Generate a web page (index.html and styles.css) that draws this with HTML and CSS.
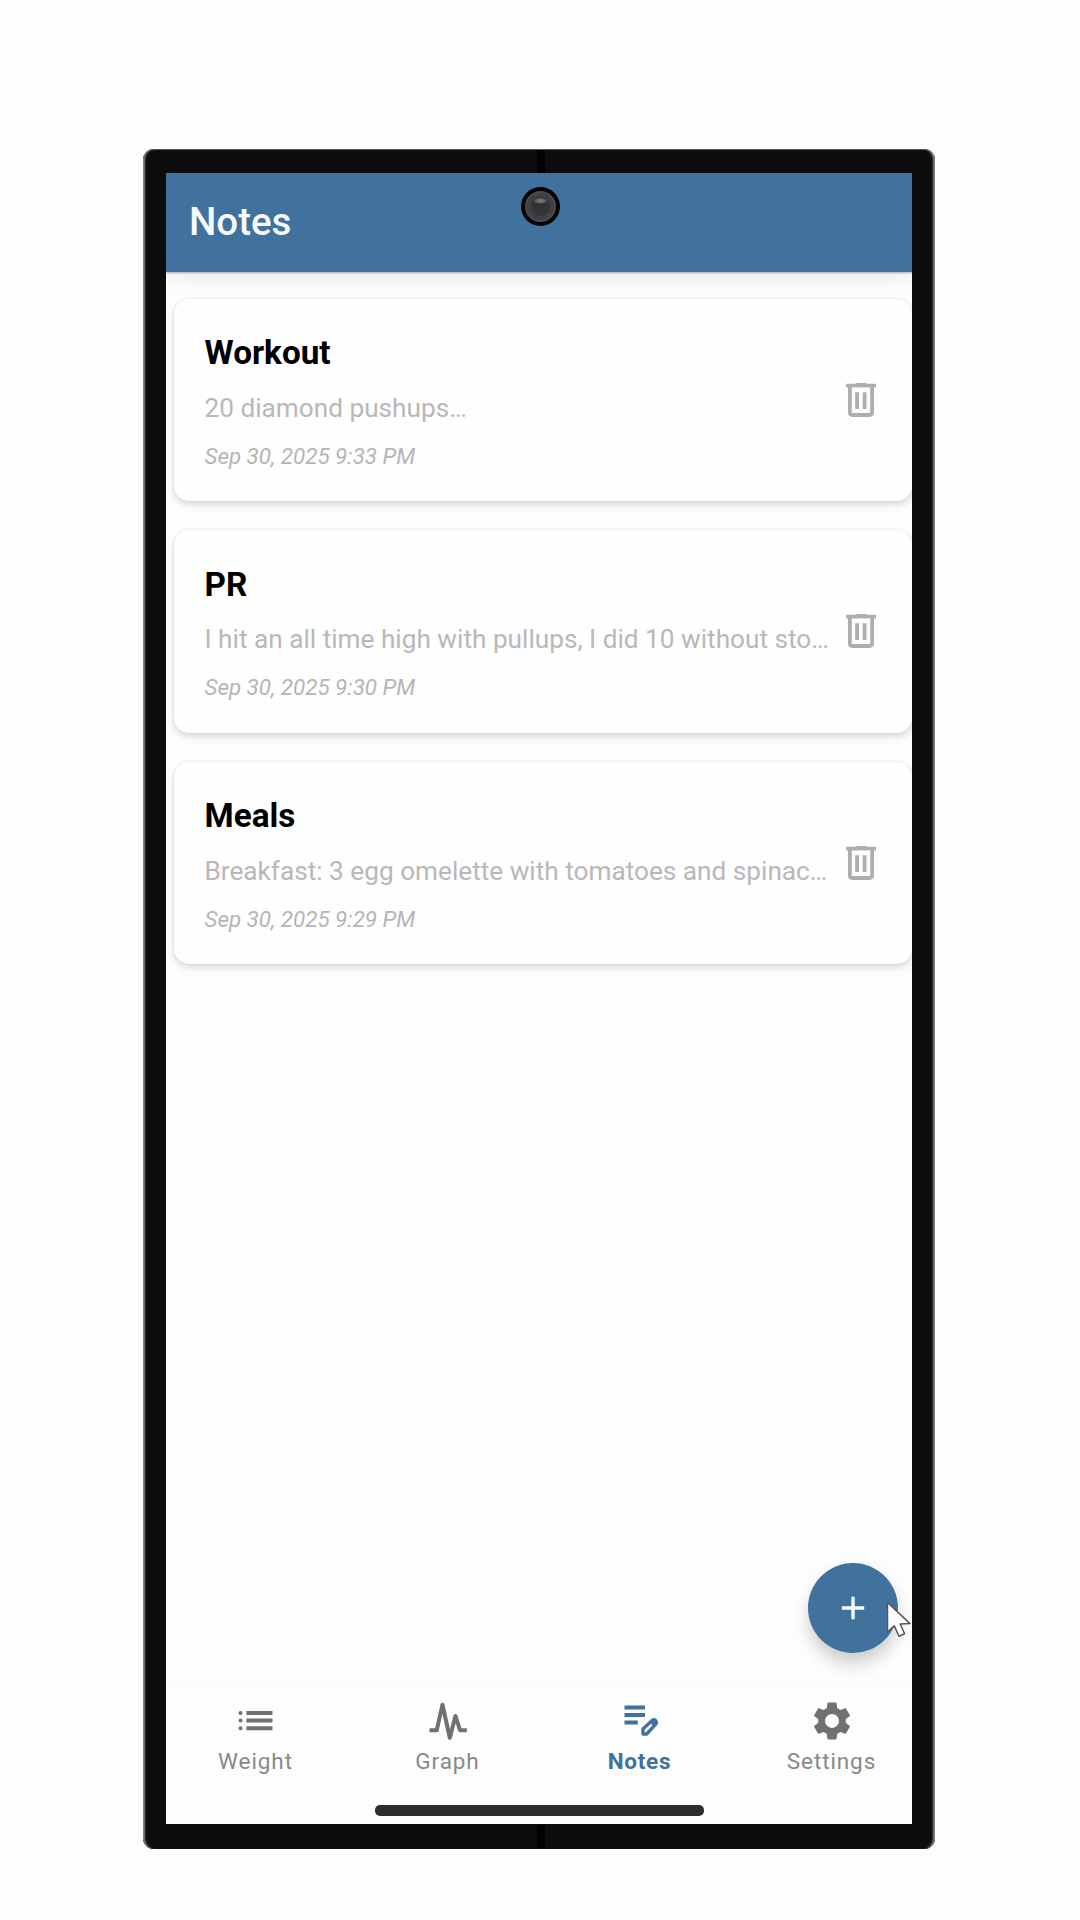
FILE: index.html
```html
<!DOCTYPE html>
<html lang="en">
<head>
<meta charset="utf-8">
<title>Notes</title>
<link rel="stylesheet" href="styles.css">
</head>
<body>
<svg width="0" height="0" class="defs">
  <symbol id="trash" viewBox="0 0 30 34">
    <path d="M0 2.6H30" stroke="currentColor" stroke-width="3.6"/>
    <path d="M9.5 1.5H20.5" stroke="currentColor" stroke-width="3"/>
    <path d="M3.9 3V29.5Q3.9 32 6.4 32H23.6Q26.1 32 26.1 29.5V3M11.1 9.3V26M18.6 9.3V26" fill="none" stroke="currentColor" stroke-width="3.8"/>
  </symbol>
</svg>
<div class="phone">
  <div class="seam seam-top"></div>
  <div class="seam seam-bottom"></div>
  <div class="screen">
    <header class="appbar"><h1>Notes</h1></header>
    <div class="camera"><div class="lens"></div></div>
    <main class="list">
      <article class="card">
        <div class="body">
          <h2>Workout</h2>
          <p class="preview">20 diamond pushups…</p>
          <time>Sep 30, 2025 9:33 PM</time>
        </div>
        <svg class="trash"><use href="#trash"/></svg>
      </article>
      <article class="card">
        <div class="body">
          <h2>PR</h2>
          <p class="preview">I hit an all time high with pullups, I did 10 without sto…</p>
          <time>Sep 30, 2025 9:30 PM</time>
        </div>
        <svg class="trash"><use href="#trash"/></svg>
      </article>
      <article class="card">
        <div class="body">
          <h2>Meals</h2>
          <p class="preview">Breakfast: 3 egg omelette with tomatoes and spinac…</p>
          <time>Sep 30, 2025 9:29 PM</time>
        </div>
        <svg class="trash"><use href="#trash"/></svg>
      </article>
    </main>
    <nav class="tabs">
      <div class="tab">
        <svg class="icon" viewBox="0 0 46 46" fill="none" stroke="currentColor">
          <path d="M13.4 15.1H39.5M13.4 22.6H39.5M13.4 30.2H39.5" stroke-width="4"/>
          <path d="M7.5 15.1h.01M7.5 22.6h.01M7.5 30.2h.01" stroke-width="4" stroke-linecap="round"/>
        </svg>
        <span>Weight</span>
      </div>
      <div class="tab">
        <svg class="icon" viewBox="0 0 46 46" fill="none" stroke="currentColor" stroke-width="4" stroke-linejoin="round">
          <path d="M4.5 32.2H11.7L17.5 6.8L24.8 39.8L30.5 18L35 32.2H41.8"/>
        </svg>
        <span>Graph</span>
      </div>
      <div class="tab active">
        <svg class="icon" viewBox="0 0 46 46" fill="none" stroke="currentColor">
          <path d="M7.5 9.5H28M7.5 17H28M7.5 24.5H20.8" stroke-width="4"/>
          <path d="M26 36V30.9L35.1 22.5Q36.8 21 38.5 22.6Q40.1 24.4 38.7 26.1L29.7 36Z" stroke-width="3.4" stroke-linejoin="round"/>
          <path d="M32.8 24.6L36.8 28.6L40 25.1L36.3 21.4Z" fill="currentColor" stroke="none"/>
        </svg>
        <span>Notes</span>
      </div>
      <div class="tab">
        <svg class="icon" viewBox="0 0 24 24" fill="currentColor">
          <path d="M19.14 12.94c.04-.3.06-.61.06-.94 0-.32-.02-.64-.07-.94l2.03-1.58c.18-.14.23-.41.12-.61l-1.92-3.32c-.12-.22-.37-.29-.59-.22l-2.39.96c-.5-.38-1.03-.7-1.62-.94l-.36-2.54c-.04-.24-.24-.41-.48-.41h-3.84c-.24 0-.43.17-.47.41l-.36 2.54c-.59.24-1.13.57-1.62.94l-2.39-.96c-.22-.08-.47 0-.59.22L2.74 8.87c-.12.21-.08.47.12.61l2.03 1.58c-.05.3-.09.63-.09.94s.02.64.07.94l-2.03 1.58c-.18.14-.23.41-.12.61l1.92 3.32c.12.22.37.29.59.22l2.39-.96c.5.38 1.03.7 1.62.94l.36 2.54c.05.24.24.41.48.41h3.84c.24 0 .44-.17.47-.41l.36-2.54c.59-.24 1.13-.56 1.62-.94l2.39.96c.22.08.47 0 .59-.22l1.92-3.32c.12-.22.07-.47-.12-.61l-2.01-1.58zM12 15.6c-1.98 0-3.6-1.62-3.6-3.6s1.62-3.6 3.6-3.6 3.6 1.62 3.6 3.6-1.62 3.6-3.6 3.6z"/>
        </svg>
        <span>Settings</span>
      </div>
    </nav>
    <div class="home"></div>
    <button class="fab" aria-label="Add note">
      <svg width="24" height="24" viewBox="0 0 24 24"><path d="M12 .8V23.2M.8 12H23.2" stroke="#f4fbff" stroke-width="3.4"/></svg>
    </button>
    <svg class="cursor" viewBox="0 0 26 37" width="26" height="37">
      <path d="M1.5 1.5V31L8.3 24.9L13 35.2L18.6 32.7L14.2 23L24 22.6Z" fill="#fff" stroke="#555" stroke-width="1.5" stroke-linejoin="round"/>
    </svg>
  </div>
</div>
</body>
</html>
```
FILE: styles.css
```css
* { box-sizing: border-box; margin: 0; padding: 0; }
body {
  height: 1920px;
  padding: 149px 145px 0 143px;
  background: #fdfdfd;
  font-family: Roboto, "Liberation Sans", sans-serif;
  overflow: hidden;
}
.defs { display: block; position: absolute; }
.phone {
  position: relative;
  height: 1700px;
  padding: 24px 23px 25px;
  border-radius: 11px;
  background: #0d0d0d;
  box-shadow: inset 3px 0 2px -1px #888, inset -3px 0 2px -1px #888, inset 0 1px 0 #555, inset 0 -1px 1px #000;
}
.seam { position: absolute; left: 394px; width: 8px; height: 23px; background: #000; }
.seam-top { top: 1px; }
.seam-bottom { bottom: 1px; }
.screen {
  position: relative;
  display: flex;
  flex-direction: column;
  height: 100%;
  background: #fdfdfd;
  overflow: hidden;
}
.appbar {
  flex: none;
  height: 99px;
  padding-left: 23px;
  background: #40729d;
  box-shadow: 0 1px 2px rgba(0,0,0,.3), 0 4px 22px rgba(0,0,0,.09);
}
h1 {
  color: #f6fbff;
  font-size: 38.5px;
  font-weight: 500;
  line-height: 98px;
}
.camera {
  position: absolute;
  left: 355px;
  top: 14px;
  width: 39px;
  height: 39px;
  padding: 4px;
  border-radius: 50%;
  background: #050505;
}
.lens {
  height: 100%;
  border: 2px solid #4b4b4d;
  border-radius: 50%;
  background:
    radial-gradient(ellipse 7px 3px at 50% 29%, #777 0, #666 60%, transparent 100%),
    radial-gradient(circle at 50% 50%, #303030 0, #343434 9px, #3e4045 10px);
}
.list {
  flex: 1;
  display: flex;
  flex-direction: column;
  gap: 29px;
  padding: 26.5px 0 0 8px;
}
.card {
  display: flex;
  align-items: center;
  height: 202.5px;
  padding: 0 36px 0 30.5px;
  border-radius: 15px;
  background: #fefefe;
  box-shadow: 0 4px 7px rgba(0,0,0,.13), 0 0 3px rgba(0,0,0,.1);
}
.body { flex: 1; min-width: 0; padding-top: 4px; white-space: nowrap; }
h2 { color: #000; font-size: 33.3px; font-weight: 700; line-height: 44px; }
.preview { margin-top: 12.5px; color: #b8b8b8; font-size: 26.2px; line-height: 40px; }
time { display: block; margin-top: 11px; color: #b5b5b5; font-size: 22.4px; font-style: italic; line-height: 34px; }
.trash { flex: none; width: 30px; height: 34px; color: #aeaeae; }
.tabs {
  flex: none;
  display: grid;
  grid-template-columns: repeat(4, 192px);
  width: 768px;
  height: 141px;
  margin-left: -6.5px;
  padding-top: 14px;
  border-top: 1px solid #f8f8f8;
}
.tab { display: flex; flex-direction: column; align-items: center; color: #707070; }
.icon { width: 46px; height: 46px; }
.tab span { color: #888; font-size: 22.5px; letter-spacing: .9px; line-height: 34px; }
.tab.active { color: #40729d; }
.tab.active span { color: #40729d; font-weight: 700; letter-spacing: .7px; }
.home {
  position: absolute;
  left: 209px;
  bottom: 8.5px;
  width: 329px;
  height: 11px;
  border-radius: 5px;
  background: #2d2d2d;
}
.fab {
  position: absolute;
  left: 642px;
  bottom: 171px;
  display: grid;
  place-items: center;
  width: 90px;
  height: 90px;
  border: 0;
  border-radius: 50%;
  background: #40729d;
  box-shadow: 0 13px 18px -2px rgba(0,0,0,.17), 0 3px 18px rgba(0,0,0,.05);
}
.cursor { position: absolute; left: 720px; top: 1427.5px; }
```
